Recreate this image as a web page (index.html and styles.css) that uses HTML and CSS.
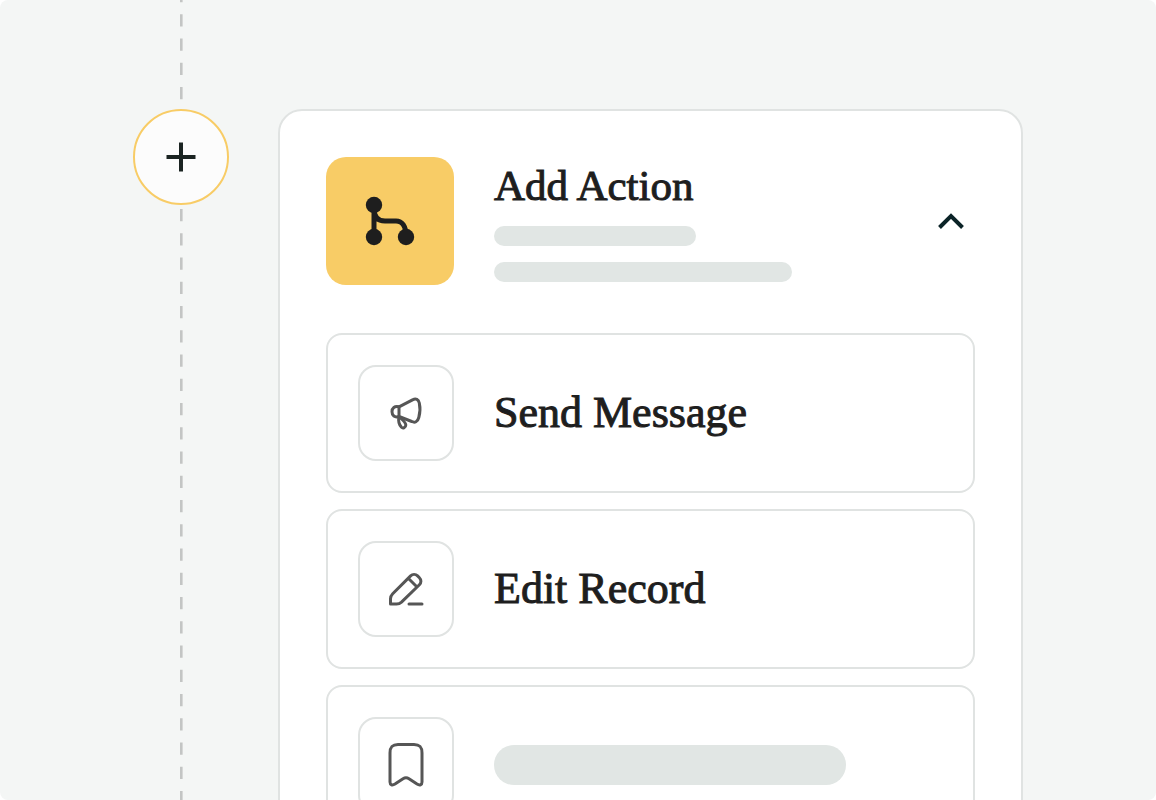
FILE: index.html
```
<!DOCTYPE html>
<html lang="en">
<head>
    <meta charset="UTF-8">
    <meta name="viewport" content="width=device-width, initial-scale=1.0">
    <title>Add Action</title>
    <link rel="stylesheet" href="styles.css">
</head>
<body>
    <main class="canvas">
        <div class="rail">
            <svg class="dash dash-top" stroke="#c3c5c4" stroke-width="2.600" stroke-dasharray="12.250 12" stroke-dashoffset="10">
                <line x1="2.300" y1="0" x2="2.300" y2="100%"/>
            </svg>
            <button class="add-btn" type="button" aria-label="Add step">
                <svg width="30" height="30" viewBox="0 0 30 30" fill="none" stroke="#1b2422" stroke-width="4">
                    <path d="M15 .500v29M.500 15h29"/>
                </svg>
            </button>
            <svg class="dash dash-bottom" stroke="#c3c5c4" stroke-width="2.600" stroke-dasharray="12.250 12">
                <line x1="2.300" y1="0" x2="2.300" y2="100%"/>
            </svg>
        </div>

        <section class="panel">
            <header class="panel-header">
                <div class="panel-icon">
                    <svg width="52" height="52" viewBox="0 0 52 52" fill="none" stroke="#1e1e1e" stroke-width="5">
                        <path d="M10 10v32M10 14c0 8 4 12 11 12h11c6 0 10 5 10 15"/>
                        <g fill="#1e1e1e" stroke="none">
                            <circle cx="10" cy="10" r="8.200"/>
                            <circle cx="10" cy="42" r="8.200"/>
                            <circle cx="42" cy="42" r="8.200"/>
                        </g>
                    </svg>
                </div>
                <div class="panel-text">
                    <h1>Add Action</h1>
                    <div class="line line-short"></div>
                    <div class="line line-long"></div>
                </div>
                <button class="toggle-btn" type="button" aria-label="Collapse">
                    <svg width="28" height="18" viewBox="0 0 28 18" fill="none" stroke="#0b2327" stroke-width="4">
                        <path d="M2.500 15.500L14 4l11.500 11.500"/>
                    </svg>
                </button>
            </header>

            <div class="actions">
                <button class="action" type="button">
                    <span class="action-icon">
                        <svg width="48" height="48" viewBox="0 0 48 48" fill="none" stroke="#565656" stroke-width="3" stroke-linecap="round" stroke-linejoin="round">
                            <path d="M17 17.800L30.500 10.800C34 9.200 36.500 10.300 37.300 14c1 4.500.800 10-.500 14.500-1.200 4.500-4 5.500-7 4L17 27.500z"/>
                            <path d="M17 17.800c-4.500-1-7 1.200-7 5s2.500 6 7 4.700M17 27.500c-.800 4 .300 8.500 2.500 10.800 1.500 1.500 4.300.200 4.300-2.300 0-2.500-3.300-5-6.800-8.500z"/>
                        </svg>
                    </span>
                    <span class="action-label">Send Message</span>
                </button>
                <button class="action" type="button">
                    <span class="action-icon">
                        <svg width="48" height="48" viewBox="0 0 48 48" fill="none" stroke="#565656" stroke-width="3" stroke-linecap="round" stroke-linejoin="round">
                            <path d="M8.500 39v-5c0-2 .800-3.800 2.200-5.200L28.600 10.900c2-2 5-2 7 0l1.800 1.800c2 2 2 5 0 7L19.500 37.100C18.100 38.400 16.500 39 14.500 39zM26.500 13.500l8.300 8.300M27 39h13"/>
                        </svg>
                    </span>
                    <span class="action-label">Edit Record</span>
                </button>
                <button class="action" type="button" aria-label="Loading action">
                    <span class="action-icon">
                        <svg width="48" height="48" viewBox="0 0 48 48" fill="none" stroke="#565656" stroke-width="3" stroke-linecap="round" stroke-linejoin="round">
                            <path d="M8 12c0-6 2-8.500 8-8.500h16c6 0 8 2.500 8 8.500v29c0 3-2.300 3.700-5 2l-8-5.300c-2.300-1.500-3.700-1.500-6 0L13 43C10.300 44.700 8 44 8 41z"/>
                        </svg>
                    </span>
                    <span class="line line-label"></span>
                </button>
            </div>
        </section>
    </main>
</body>
</html>
```
FILE: styles.css
```
* {
    box-sizing: border-box;
}
body {
    margin: 0;
    background-color: #fff;
    font-family: "Liberation Serif", "Times New Roman", serif;
    color: #1e1e1e;
}
.canvas {
    display: flex;
    gap: 49px;
    height: 100vh;
    padding: 0 133px;
    background-color: #f4f6f5;
    border-radius: 8px;
    overflow: hidden;
}
.rail {
    display: flex;
    flex-direction: column;
    align-items: center;
    flex: none;
    width: 96px;
}
.dash {
    width: 4px;
}
.dash-top {
    height: 101px;
    margin-bottom: 8px;
}
.dash-bottom {
    flex: 1;
    margin-top: 4px;
}
.add-btn {
    display: flex;
    justify-content: center;
    align-items: center;
    flex: none;
    width: 96px;
    height: 96px;
    padding: 0;
    background-color: #fcfcfc;
    border: 2px solid #f8cc66;
    border-radius: 50%;
    cursor: pointer;
}
.panel {
    flex: 1;
    align-self: flex-start;
    margin-top: 109px;
    padding: 46px;
    background-color: #fff;
    border: 2px solid #e0e3e2;
    border-radius: 24px;
}
.panel-header {
    display: flex;
    align-items: center;
    gap: 40px;
    margin-bottom: 48px;
}
.panel-icon {
    display: flex;
    justify-content: center;
    align-items: center;
    flex: none;
    width: 128px;
    height: 128px;
    background-color: #f8cc66;
    border-radius: 20px;
}
.panel-text {
    flex: 1;
}
h1,
.action-label {
    margin: 0;
    font-size: 43px;
    font-weight: normal;
    line-height: 52px;
    -webkit-text-stroke: 1px #1e1e1e;
}
h1 {
    margin-bottom: 14px;
}
.action-label {
    font-size: 44px;
}
.line {
    height: 20px;
    background-color: #e1e6e4;
    border-radius: 20px;
}
.line-short {
    width: 202px;
    margin-bottom: 16px;
}
.line-long {
    width: 298px;
}
.line-label {
    width: 352px;
    height: 40px;
}
.toggle-btn {
    display: flex;
    padding: 10px;
    background: none;
    border: none;
    cursor: pointer;
}
.actions {
    display: flex;
    flex-direction: column;
    gap: 16px;
}
.action {
    display: flex;
    align-items: center;
    gap: 40px;
    width: 100%;
    padding: 30px;
    background-color: #fff;
    border: 2px solid #e0e3e2;
    border-radius: 16px;
    color: inherit;
    font-family: inherit;
    text-align: left;
    cursor: pointer;
}
.action-icon {
    display: flex;
    justify-content: center;
    align-items: center;
    flex: none;
    width: 96px;
    height: 96px;
    border: 2px solid #e0e3e2;
    border-radius: 18px;
}
```
